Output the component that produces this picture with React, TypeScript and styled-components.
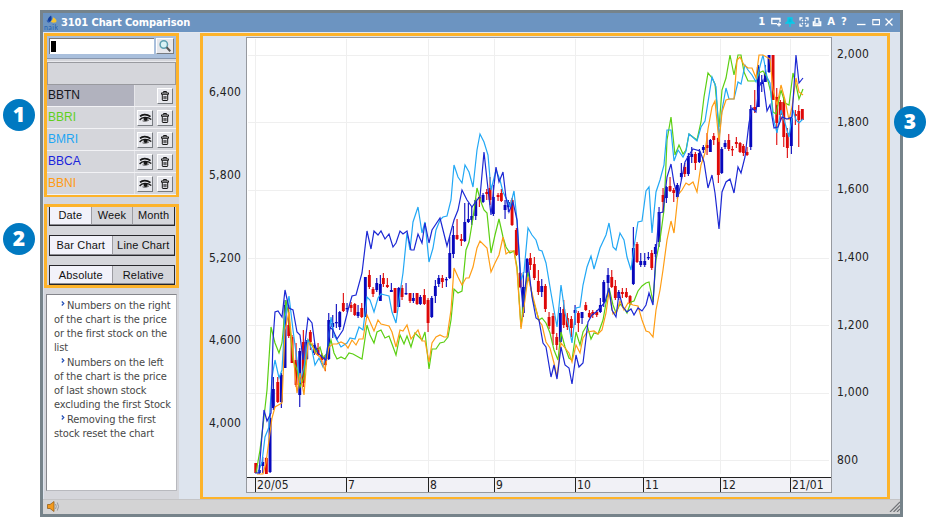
import React from "react";
import styled, { createGlobalStyle } from "styled-components";

const UI_FONT = '"DejaVu Sans Condensed", "DejaVu Sans", sans-serif';
const AMBER = "#fdb32a";

const GlobalStyle = createGlobalStyle`
  * { box-sizing: border-box; }
  body { margin: 0; background: #fff; overflow: hidden; }
`;

const Page = styled.div`
  position: relative;
  width: 934px;
  height: 526px;
  padding: 10px 0 0 40px;
  font-family: ${UI_FONT};
`;

const AppWindow = styled.div`
  display: flex;
  flex-direction: column;
  width: 863px;
  height: 507px;
  border: 3px solid #76838a;
  background: #dde4ee;
`;

const TitleBar = styled.header`
  display: flex;
  align-items: center;
  height: 19px;
  flex: none;
  padding: 0 2px 0 1px;
  background: #6c94c1;
  color: #fff;
`;

const Title = styled.h1`
  flex: 1;
  margin: 0 0 0 3px;
  font: bold 11px/18px "DejaVu Sans Condensed", "DejaVu Sans", sans-serif;
  font-stretch: condensed;
  letter-spacing: -0.1px;
  white-space: nowrap;
`;

const TitleIcons = styled.div`
  display: flex;
  align-items: center;
  padding-bottom: 1px;
`;

const TitleIcon = styled.span<{ $w?: number }>`
  display: flex;
  justify-content: center;
  width: ${(p) => p.$w ?? 13.8}px;
  font: bold 10px/14px "DejaVu Sans", sans-serif;
`;

const Body = styled.div`
  display: flex;
  flex: 1;
  min-height: 0;
  padding-left: 1px;
  border-top: 1px solid #e4e8ee;
`;

const Sidebar = styled.aside`
  width: 135px;
  flex: none;
  margin-right: 21px;
  background: #d5d6db;
`;

const Highlight = styled.section<{ $h: number }>`
  height: ${(p) => p.$h}px;
  border: 3px solid ${AMBER};
`;

const SearchBar = styled.div`
  display: flex;
  justify-content: space-between;
  height: 23px;
  padding: 2px 2px 0 2px;
  background: #a9bfdc;
  border-bottom: 1px solid #8795ab;
`;

const SearchField = styled.div`
  width: 105px;
  height: 16px;
  padding: 2px 1px;
  background: #fff;
  border: solid #777;
  border-width: 1px 0 0 1px;
`;

const Caret = styled.div`
  width: 5px;
  height: 11px;
  background: #000;
`;

const ToolButton = styled.button<{ $w?: number }>`
  display: flex;
  align-items: center;
  justify-content: center;
  width: ${(p) => p.$w ?? 16}px;
  height: 16px;
  padding: 0;
  background: #e6e7ec;
  border: 1px solid;
  border-color: #fff #777b80 #777b80 #fff;
`;

const ListHeader = styled.div`
  height: 23px;
  margin-top: 3px;
  border: 1px solid #999a9f;
  box-shadow: 0 -1px #e9eaee;
`;

const StockRow = styled.div`
  display: flex;
  height: 22px;
  border-bottom: 1px solid #f2f2f5;
`;

const StockName = styled.div<{ $color: string; $active?: boolean }>`
  width: 88px;
  padding-left: 1px;
  background: ${(p) => (p.$active ? "#b1b2be" : "#d5d6db")};
  border-right: 1px solid #e6e6ea;
  color: ${(p) => p.$color};
  font: 12px/20px "Liberation Sans", sans-serif;
`;

const StockTools = styled.div`
  display: flex;
  flex: 1;
  align-items: center;
  justify-content: flex-end;
  gap: 4px;
  padding: 1px 3px 0 0;
`;

const Controls = styled(Highlight)`
  margin-top: 7px;
  padding: 0 1px 0 2px;
  display: flex;
  flex-direction: column;
  gap: 9px;
`;

const Segmented = styled.div<{ $h: number; $open?: boolean }>`
  display: flex;
  height: ${(p) => p.$h}px;
  border: 1.5px solid #27272c;
  border-top-width: ${(p) => (p.$open ? 0 : 1)}px;
`;

const Segment = styled.button<{ $on?: boolean; $top?: boolean }>`
  flex: 1;
  padding: 0 0 ${(p) => (p.$top ? 2 : 0)}px;
  border: 0;
  border-left: ${(p) => (p.$on ? "0" : "1px solid #9c9ca2")};
  border-bottom: 1px solid #8d8d93;
  background: ${(p) => (p.$on ? "#f2f2fa" : "#d5d6db")};
  color: #111;
  font: 11px/16px "Liberation Sans", sans-serif;
  letter-spacing: 0.15px;
  white-space: nowrap;
`;

const Notes = styled.div`
  width: 131px;
  height: 197px;
  margin: 6px 0 0 2px;
  padding: 4px 0 0 7px;
  background: #fff;
  border: 1px solid #84858b;
  border-right-color: #b8b9be;
  border-bottom-color: #b8b9be;
  color: #484848;
  font-size: 11px;
  line-height: 14px;
  letter-spacing: -0.13px;
`;

const Note = styled.p`
  margin: 0 0 1px;
  text-indent: 7px;
  white-space: pre-line;
`;

const Bullet = styled.svg`
  margin: 0 2px 3px 0;
  width: 4px;
  height: 5px;
`;

const ChartPanel = styled.main`
  display: flex;
  width: 690px;
  height: 467px;
  padding-top: 1px;
  border: 3px solid ${AMBER};
`;

const PriceAxis = styled.div<{ $side: "left" | "right" }>`
  display: flex;
  flex-direction: column;
  justify-content: space-between;
  flex: ${(p) => (p.$side === "left" ? "0 0 43px" : "1")};
  height: ${(p) => (p.$side === "left" ? 345 : 420)}px;
  margin-top: ${(p) => (p.$side === "left" ? 48 : 10)}px;
  padding-left: ${(p) => (p.$side === "left" ? 6 : 5)}px;
  color: #222;
  font-size: 12px;
  line-height: 14px;
  letter-spacing: 0.25px;
`;

const ChartBox = styled.div`
  width: 586px;
  height: 456px;
  flex: none;
  display: flex;
  flex-direction: column;
  border: 1px solid #96999f;
  background: #fff;
`;

const Plot = styled.svg`
  display: block;
  width: 584px;
  height: 439px;
`;

const MonthAxis = styled.div`
  display: grid;
  grid-template-columns: 8px 91px 82px 66px 81px 68px 77px 70px 1fr;
  height: 15px;
  background: #f1f1f6;
  border-top: 1px solid #222;
`;

const Month = styled.span`
  padding-left: 1px;
  border-left: 1px solid #222;
  color: #222;
  font-size: 12px;
  line-height: 14px;
  letter-spacing: 0.15px;
  &:first-child { border: 0; }
`;

const StatusBar = styled.footer`
  display: flex;
  align-items: center;
  justify-content: space-between;
  height: 15px;
  flex: none;
  padding-left: 4px;
  background: linear-gradient(#c4c4c6 0 1px, #d3d3d4 1px);
`;

const Badge = styled.div<{ $x: number; $y: number }>`
  position: absolute;
  left: ${(p) => p.$x}px;
  top: ${(p) => p.$y}px;
  width: 32px;
  height: 32px;
  border-radius: 50%;
  background: #0079c1;
  color: #fff;
  text-align: center;
  font: 800 21px/31px "Open Sans", sans-serif;
`;

const MONTHS = ["", "20/05", "7", "8", "9", "10", "11", "12", "21/01"];
const MONTH_X = [255, 346, 428, 494, 575, 643, 720, 790];
const GRID_Y = [55.5, 122.5, 190.5, 258.5, 325.5, 393.5, 460.5];

const STOCKS = [
  { name: "BBTN", color: "#16161c" },
  { name: "BBRI", color: "#5fd01c" },
  { name: "BMRI", color: "#1ea6f4" },
  { name: "BBCA", color: "#1a24dc" },
  { name: "BBNI", color: "#ff9b12" },
];

const SERIES = [
  {
    color: "#5bcf12",
    points:
      "256,473 260,450 263,426 267,390 271,327 275,343 279,353 282,343 286,300 289,317 293,360 297,370 300,387 304,377 308,340 313,347 316,352 320,347 323,358 327,353 331,340 334,353 337,359 341,357 345,359 349,353 353,354 362,359 367,325 370,335 374,343 377,332 381,330 385,338 389,336 392,344 396,355 400,335 404,344 407,336 411,347 415,333 418,336 422,340 425,332 429,369 432,349 436,349 440,343 444,342 448,337 451,320 454,289 458,293 462,291 466,250 469,242 473,218 477,188 481,202 484,210 487,213 491,253 495,235 499,219 503,237 506,247 510,253 514,251 517,267 521,327 524,297 528,272 533,300 539,320 542,318 546,323 550,333 554,350 558,360 561,332 565,347 569,358 572,360 576,332 580,345 583,332 587,325 591,339 594,333 598,334 603,320 606,303 609,288 613,305 616,313 620,304 624,308 627,313 631,302 634,301 638,291 642,286 646,283 649,282 653,302 656,260 660,240 664,210 667,140 671,117 675,155 679,145 683,154 686,150 689,134 697,140 701,122 704,97 708,73 712,78 715,84 719,127 722,90 726,78 730,55 734,75 738,55 741,55 744,72 748,81 756,81 759,73 763,71 767,77 771,93 773,112 776,114 781,90 785,103 789,105 793,73 796,85 799,99 803,89",
  },
  {
    color: "#22a8f5",
    points:
      "258,473 262,462 265,437 269,427 272,377 275,360 279,378 282,370 285,317 289,296 293,330 297,360 300,383 304,367 308,340 312,350 315,365 319,358 323,367 327,352 331,317 334,335 341,347 347,343 350,338 355,339 359,327 363,330 367,297 370,300 374,312 378,298 381,294 385,295 389,296 392,312 396,323 400,293 403,273 407,233 410,250 413,222 418,207 422,233 425,222 429,262 433,248 436,230 440,220 443,217 447,216 451,200 454,165 458,177 462,183 465,165 469,172 473,187 477,150 480,134 484,142 488,155 491,190 496,170 500,180 503,192 507,200 510,207 514,191 517,220 521,280 524,272 528,228 532,235 536,240 539,250 542,251 546,263 551,293 554,310 557,327 561,285 565,313 569,327 572,343 576,308 580,307 583,285 587,267 591,256 594,269 600,248 606,235 609,223 613,247 616,250 620,233 624,240 627,257 631,270 634,247 638,222 642,221 646,191 649,187 652,233 656,192 660,180 664,165 667,130 671,130 674,161 678,150 683,157 686,151 689,134 697,141 701,127 705,121 708,102 712,77 716,87 719,138 722,110 726,88 729,99 734,99 738,82 741,84 745,65 748,70 752,75 756,82 759,70 763,55 767,77 770,83 773,117 777,133 781,110 785,123 789,137 793,110 796,120 799,123 803,119",
  },
  {
    color: "#ff9d14",
    points:
      "257,474 263,474 266,463 269,440 272,418 275,407 282,403 285,330 289,312 293,353 297,393 300,373 304,395 308,343 312,343 315,353 320,357 325,370 329,347 333,344 337,344 341,342 345,344 348,348 352,340 356,345 359,339 363,339 367,315 374,331 378,320 381,324 389,326 392,332 396,347 400,330 403,331 407,325 411,339 418,330 422,341 425,341 429,362 432,343 436,337 440,335 444,337 447,337 451,310 454,268 458,277 462,285 466,278 469,278 473,267 477,248 480,241 487,248 491,272 495,263 499,255 503,237 506,254 510,251 514,251 517,270 521,329 524,307 528,277 532,293 539,321 542,325 546,342 550,348 554,363 557,377 561,343 565,348 569,353 572,362 576,345 580,353 583,338 587,332 594,331 598,334 602,330 606,313 609,292 613,314 617,311 620,301 624,310 628,303 633,305 638,306 642,320 646,331 649,332 653,337 656,310 660,290 663,270 667,240 671,221 674,233 678,195 682,190 686,183 689,185 693,182 697,192 701,165 705,153 708,129 712,107 715,101 719,142 722,112 726,100 729,99 734,99 737,60 740,57 744,65 748,68 752,68 756,78 759,55 763,55 770,59 773,90 777,105 781,85 785,100 789,120 792,107 796,78 799,92 803,95",
  },
  {
    color: "#1c28d4",
    points:
      "255,473 259,473 264,410 267,421 271,413 273,340 275,312 278,311 282,317 285,290 289,308 293,310 297,332 300,335 303,360 308,318 312,323 315,345 318,353 323,358 326,360 330,327 333,330 337,339 343,330 348,310 352,296 356,295 362,273 367,231 371,249 374,231 378,235 381,231 385,239 389,234 393,247 396,243 400,231 403,234 407,231 411,250 414,250 418,234 422,243 425,223 429,243 432,230 440,218 447,246 454,220 458,210 462,190 467,200 472,207 477,200 480,197 484,152 487,180 491,215 496,167 499,182 503,172 506,198 509,212 513,202 517,220 521,287 523,307 528,262 532,297 536,318 539,320 543,343 546,347 551,377 554,365 557,379 561,347 565,365 569,368 572,384 576,355 579,367 583,363 588,322 592,315 596,312 600,308 605,302 609,288 612,310 616,317 619,293 623,307 627,312 631,309 634,315 638,308 642,311 646,305 649,293 653,305 656,253 659,213 663,212 667,177 671,164 674,183 678,197 682,177 685,162 689,155 693,149 700,151 704,162 708,188 712,175 715,193 719,229 722,192 726,182 730,179 734,193 738,167 741,173 745,157 749,123 752,108 756,112 759,87 763,80 767,111 770,105 774,128 778,127 782,117 787,119 792,117 796,55 799,83 803,78",
  },
];

// x, high, body top, body bottom, low; "u" closes higher, "d" closes lower
type Candle = [number, number, number, number, number, "u" | "d"];
const CANDLES: Candle[] = [
  [255.7, 463, 463, 473, 473, "d"], [259.3, 465, 470, 473, 474, "u"], [262.7, 457, 462, 466, 473, "u"],
  [266.3, 457, 458, 474, 474, "d"], [270, 413, 418, 472, 473, "u"], [273.3, 377, 389, 408, 410, "u"],
  [277.7, 377, 382, 402, 403, "d"], [281.3, 373, 375, 402, 408, "u"], [285, 300, 305, 368, 368, "u"],
  [288.7, 305, 325, 336, 338, "d"], [292, 335, 337, 363, 363, "d"], [296, 343, 360, 385, 387, "d"],
  [299.7, 348, 351, 395, 407, "u"], [303.3, 330, 342, 383, 387, "d"], [306.7, 340, 342, 359, 360, "u"],
  [310.3, 330, 332, 342, 350, "d"], [314.3, 343, 345, 353, 355, "u"], [318, 343, 348, 355, 356, "d"],
  [321.7, 353, 355, 360, 362, "d"], [325.3, 355, 357, 365, 371, "d"], [328.7, 313, 320, 359, 360, "u"],
  [332.7, 315, 323, 327, 338, "u"], [336.3, 304, 322, 323, 328, "u"], [339.7, 311, 312, 327, 330, "u"],
  [343.3, 293, 303, 311, 312, "d"], [347, 303, 308, 309, 312, "u"], [351, 302, 305, 308, 312, "d"],
  [354.7, 303, 304, 315, 316, "d"], [358, 305, 312, 316, 318, "u"], [361.7, 303, 308, 317, 318, "d"],
  [365.3, 277, 277, 317, 317, "u"], [369.3, 270, 275, 287, 289, "d"], [373, 287, 289, 294, 297, "d"],
  [376.7, 278, 283, 290, 292, "u"], [380.3, 275, 284, 301, 301, "u"], [383.3, 273, 278, 284, 287, "d"],
  [387.3, 278, 285, 287, 288, "d"], [391.3, 283, 290, 292, 292, "u"], [395, 288, 288, 313, 313, "d"],
  [398.7, 287, 288, 307, 307, "u"], [402, 285, 288, 297, 300, "d"], [406, 283, 293, 294, 295, "u"],
  [410, 293, 293, 301, 303, "d"], [413.3, 293, 298, 301, 303, "u"], [417, 293, 293, 304, 305, "d"],
  [420.3, 295, 297, 304, 305, "u"], [424.3, 289, 295, 304, 305, "d"], [428, 298, 300, 323, 332, "d"],
  [431.7, 296, 298, 317, 318, "u"], [435.3, 280, 286, 296, 303, "u"], [438.7, 275, 278, 284, 287, "u"],
  [442.3, 275, 278, 282, 288, "d"], [446.3, 277, 279, 280, 287, "u"], [449.7, 237, 253, 278, 279, "u"],
  [453.3, 226, 235, 254, 258, "u"], [457, 219, 235, 239, 240, "d"], [461.3, 234, 239, 241, 246, "d"],
  [464.7, 203, 222, 241, 242, "u"], [468.3, 203, 219, 222, 223, "u"], [471.7, 207, 216, 220, 225, "u"],
  [475.7, 198, 200, 216, 220, "u"], [479.3, 196, 197, 199, 207, "d"], [483, 193, 195, 202, 203, "u"],
  [486.7, 189, 192, 194, 200, "d"], [490, 177, 188, 200, 205, "d"], [493.3, 185, 197, 214, 216, "u"],
  [498, 193, 195, 197, 201, "d"], [501.3, 189, 193, 201, 202, "d"], [505, 200, 205, 210, 219, "u"],
  [508.3, 200, 202, 207, 212, "u"], [512, 198, 200, 225, 226, "d"], [516.3, 228, 230, 255, 256, "d"],
  [520, 272, 273, 287, 288, "d"], [523.3, 272, 287, 313, 317, "u"], [527, 258, 259, 273, 275, "u"],
  [530.3, 253, 258, 265, 270, "d"], [534.3, 257, 264, 278, 280, "d"], [538.3, 270, 281, 292, 295, "d"],
  [541.7, 279, 286, 292, 297, "u"], [545.3, 284, 286, 309, 312, "d"], [549, 312, 317, 326, 329, "d"],
  [553, 313, 316, 334, 345, "d"], [556.7, 333, 337, 345, 350, "d"], [560.3, 307, 313, 342, 343, "u"],
  [563.7, 300, 309, 325, 328, "d"], [567.3, 313, 318, 327, 330, "d"], [571.3, 316, 319, 328, 337, "d"],
  [575, 305, 310, 313, 325, "u"], [578.3, 311, 313, 323, 332, "d"], [582, 312, 312, 318, 324, "u"],
  [585.7, 302, 305, 310, 311, "d"], [589.3, 310, 313, 317, 318, "d"], [592.7, 310, 312, 315, 318, "d"],
  [596.7, 310, 312, 315, 317, "d"], [600.3, 298, 305, 312, 313, "u"], [603.7, 280, 282, 302, 307, "u"],
  [608, 268, 275, 283, 293, "u"], [611.7, 270, 277, 287, 288, "d"], [615.3, 280, 286, 298, 300, "d"],
  [618.7, 290, 292, 298, 300, "u"], [622.3, 288, 292, 294, 298, "d"], [626.3, 288, 292, 297, 298, "d"],
  [630, 295, 296, 304, 305, "d"], [633.3, 227, 248, 284, 285, "u"], [637, 242, 244, 262, 263, "d"],
  [640.7, 253, 261, 265, 267, "u"], [644.7, 253, 261, 265, 267, "u"], [648.3, 252, 257, 258, 260, "u"],
  [651.7, 250, 253, 268, 270, "d"], [655.3, 244, 247, 254, 257, "u"], [659, 207, 212, 242, 247, "u"],
  [663, 188, 195, 202, 213, "d"], [666.3, 186, 187, 198, 203, "u"], [670, 177, 186, 191, 192, "d"],
  [673.7, 188, 190, 193, 202, "d"], [677.3, 183, 185, 197, 199, "u"], [681.3, 163, 173, 177, 180, "u"],
  [684.7, 163, 167, 174, 177, "d"], [688.3, 153, 156, 174, 176, "u"], [691.7, 147, 154, 157, 163, "u"],
  [695.3, 152, 154, 163, 170, "d"], [699.3, 149, 153, 162, 163, "u"], [703.3, 145, 147, 150, 153, "u"],
  [707, 133, 145, 148, 155, "d"], [710.3, 139, 140, 152, 152, "u"], [713.7, 133, 136, 140, 145, "d"],
  [718.3, 137, 138, 175, 183, "d"], [721.7, 147, 149, 173, 174, "u"], [725, 140, 143, 147, 149, "u"],
  [728.7, 134, 140, 149, 151, "d"], [732.3, 146, 149, 150, 156, "d"], [736.3, 137, 142, 144, 148, "d"],
  [740, 142, 143, 152, 153, "d"], [743.3, 144, 146, 153, 156, "d"], [747, 147, 152, 155, 156, "d"],
  [750.7, 105, 109, 147, 150, "u"], [754.7, 90, 107, 110, 113, "d"], [758.3, 65, 67, 107, 107, "u"],
  [761.7, 75, 82, 84, 92, "u"], [765.3, 65, 73, 82, 82, "u"], [769, 55, 55, 72, 73, "u"],
  [773, 55, 55, 100, 100, "d"], [776.7, 88, 97, 123, 145, "d"], [780.3, 100, 102, 115, 120, "d"],
  [783.7, 97, 102, 137, 147, "d"], [787.3, 128, 133, 148, 158, "d"], [791.3, 117, 118, 146, 154, "u"],
  [795.3, 110, 114, 116, 125, "d"], [798.7, 105, 111, 120, 147, "d"], [802.3, 109, 109, 120, 120, "d"],
];

const Logo = () => (
  <svg width="14" height="17" viewBox="0 0 14 17">
    <path d="M7 1.500C3.800 3.800 3 6 4.200 8.200 6.800 8 8.700 6 7 1.500z" fill="#123c9b" />
    <path d="M9.200 3.200c3 1.400 4 3.400 2.900 5-2.200.9-5 .4-5.200-.7 1.100-.8 2-2.300 2.300-4.300z" fill="#f7c52d" />
    <path d="M2.600 6.200c.2 1.700 1.300 2.700 3 2.300L4.500 6.500z" fill="#2d5fb8" />
    <text x="0" y="15.500" fontSize="7" fontFamily="Lato, sans-serif" fill="#1f5fae" textLength="14">naik</text>
  </svg>
);

const Search = () => (
  <svg width="14" height="14" viewBox="0 0 14 14">
    <circle cx="5.800" cy="5.500" r="3.700" fill="#d9f2f5" stroke="#5d9fb0" strokeWidth="1.500" />
    <path d="M8.600 8.300l3.700 3.900" stroke="#555" strokeWidth="2" />
  </svg>
);

const Trash = () => (
  <svg width="10" height="12" viewBox="0 0 10 12" fill="none" stroke="#161616">
    <path d="M3.500 2.500V1.500h3v1M1.500 2.900h7v1.400h-7zM2.300 4.500v5.400q0 .6.600.6h4.200q.6 0 .6-.6V4.500M4.100 6v3.200M5.900 6v3.200" strokeWidth="1" />
  </svg>
);

const Eye = () => (
  <svg width="13" height="10" viewBox="0 0 13 10" fill="none" stroke="#161616">
    <path d="M1 3.400C3.200 1.200 7.500 .6 11.500 3.600" strokeWidth="1.700" />
    <path d="M.6 7C3 4 8 3.200 12.300 6.600" strokeWidth="1.300" />
    <path d="M3.500 7.800c2 .8 4.500.5 6.500-.9" strokeWidth=".7" />
    <circle cx="6.600" cy="6" r="2.100" fill="#161616" stroke="none" />
  </svg>
);

const Glyph = ({ d, color = "#fff", fill = "none" }: { d: string; color?: string; fill?: string }) => (
  <svg width="10" height="10" viewBox="0 0 10 10" fill={fill} stroke={color} strokeWidth="1.300">
    <path d={d} />
  </svg>
);

const Speaker = () => (
  <svg width="13" height="11" viewBox="0 0 13 11">
    <path d="M.5 3.500h2.500L7 .5v10L3 7.500H.5z" fill="#f39a1d" stroke="#96601b" strokeWidth=".8" />
    <path d="M8.500 3q1.500 2.500 0 5M10.300 1.500q2.500 4 0 8" fill="none" stroke="#8e9297" strokeWidth=".9" />
  </svg>
);

const Grip = () => (
  <svg width="11" height="11" viewBox="0 0 11 11" stroke="#6f7276" strokeWidth="1.200">
    <path d="M1 11L11 1M4.500 11L11 4.500M8 11l3-3" />
  </svg>
);

const ChartPlot = () => (
  <Plot viewBox="247 38 584 439">
    <g stroke="#efefef" strokeWidth="1">
      {GRID_Y.map((y) => <line key={y} x1="248" x2="829" y1={y} y2={y} />)}
      {MONTH_X.map((x) => <line key={x} x1={x + 0.5} x2={x + 0.5} y1="39" y2="474" />)}
    </g>
    {CANDLES.map(([x, high, top, bottom, low, dir]) => (
      <g key={x} fill={dir === "u" ? "#0808bd" : "#de0808"}>
        <rect x={x - 0.500} y={high} width="1.100" height={low - high} />
        <rect x={x - 1.400} y={top} width="2.900" height={Math.max(bottom - top, 1.300)} />
      </g>
    ))}
    {SERIES.map((s) => (
      <polyline key={s.color} points={s.points} fill="none" stroke={s.color} strokeWidth="1.200" />
    ))}
  </Plot>
);

export default function App() {
  return (
    <Page>
      <GlobalStyle />
      <AppWindow>
        <TitleBar>
          <Logo />
          <Title>3101 Chart Comparison</Title>
          <TitleIcons>
            <TitleIcon>1</TitleIcon>
            <TitleIcon $w={15}><Glyph d="M9 5V1.500H.8v5.200H6M.8 2h8M8 5.500v4M6 7.500h4" /></TitleIcon>
            <TitleIcon $w={13}><Glyph color="#09cbea" fill="#0bb8dc" d="M3 .8h4v3.500l2 1.700H1l2-1.700zM5 6v4" /></TitleIcon>
            <TitleIcon><Glyph d="M1 3.500V1h2.500M6.500 1H9v2.500M9 6.500V9H6.500M3.500 9H1V6.500M3 3l1 1M7 3L6 4M3 7l1-1M7 7L6 6" /></TitleIcon>
            <TitleIcon><Glyph d="M3 6V1.300h4V6M3 5H1.300v3.700h7.400V5H7M1 7h8" /></TitleIcon>
            <TitleIcon>A</TitleIcon>
            <TitleIcon $w={12}>?</TitleIcon>
            <TitleIcon $w={22}><Glyph d="M1 7.500h8.500" /></TitleIcon>
            <TitleIcon $w={8}><Glyph d="M1 2h8.300v6.300H1zM1 2.500h8" /></TitleIcon>
            <TitleIcon $w={18}><Glyph d="M1.500 1.500l7 7M8.500 1.500l-7 7" /></TitleIcon>
          </TitleIcons>
        </TitleBar>
        <Body>
          <Sidebar>
            <Highlight $h={164}>
              <SearchBar>
                <SearchField><Caret /></SearchField>
                <ToolButton $w={18} aria-label="Search"><Search /></ToolButton>
              </SearchBar>
              <ListHeader />
              {STOCKS.map((s, i) => (
                <StockRow key={s.name}>
                  <StockName $color={s.color} $active={i === 0}>{s.name}</StockName>
                  <StockTools>
                    {i > 0 && <ToolButton aria-label="Show"><Eye /></ToolButton>}
                    <ToolButton aria-label="Remove"><Trash /></ToolButton>
                  </StockTools>
                </StockRow>
              ))}
            </Highlight>
            <Controls $h={84}>
              <Segmented $h={19} $open>
                <Segment $on $top>Date</Segment>
                <Segment $top>Week</Segment>
                <Segment $top>Month</Segment>
              </Segmented>
              <Segmented $h={21}>
                <Segment $on>Bar Chart</Segment>
                <Segment>Line Chart</Segment>
              </Segmented>
              <Segmented $h={20}>
                <Segment $on>Absolute</Segment>
                <Segment>Relative</Segment>
              </Segmented>
            </Controls>
            <Notes>
              {[
                "Numbers on the right\nof the chart is the price\nor the first stock on the\nlist",
                "Numbers on the left\nof the chart is the price\nof last shown stock\nexcluding the first Stock",
                "Removing the first\nstock reset the chart",
              ].map((text) => (
                <Note key={text}>
                  <Bullet viewBox="0 0 4 5"><path d="M.8.5l2 2-2 2" fill="none" stroke="#2450b8" strokeWidth="1.200" /></Bullet>
                  {text}
                </Note>
              ))}
            </Notes>
          </Sidebar>
          <ChartPanel>
            <PriceAxis $side="left">
              {["6,400", "5,800", "5,200", "4,600", "4,000"].map((v) => <span key={v}>{v}</span>)}
            </PriceAxis>
            <ChartBox>
              <ChartPlot />
              <MonthAxis>
                {MONTHS.map((m) => <Month key={m}>{m}</Month>)}
              </MonthAxis>
            </ChartBox>
            <PriceAxis $side="right">
              {["2,000", "1,800", "1,600", "1,400", "1,200", "1,000", "800"].map((v) => <span key={v}>{v}</span>)}
            </PriceAxis>
          </ChartPanel>
        </Body>
        <StatusBar>
          <Speaker />
          <Grip />
        </StatusBar>
      </AppWindow>
      <Badge $x={3} $y={99}>1</Badge>
      <Badge $x={3} $y={223}>2</Badge>
      <Badge $x={894} $y={106}>3</Badge>
    </Page>
  );
}
